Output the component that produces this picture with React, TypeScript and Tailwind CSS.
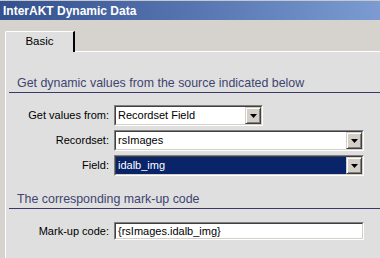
import React from "react";

const font = { fontFamily: '"Liberation Sans", Arial, sans-serif' };

function Arrow() {
  return (
    <div className="w-[16px] h-[17px] bg-[#d4d0c8] border-t border-l border-t-[#d4d0c8] border-l-[#d4d0c8] border-r border-b border-r-[#404040] border-b-[#404040] flex items-center justify-center shadow-[inset_1px_1px_0_#ffffff,inset_-1px_-1px_0_#808080]">
      <svg width="7" height="4" viewBox="0 0 7 4">
        <polygon points="0,0 7,0 3.5,4" fill="#000" />
      </svg>
    </div>
  );
}

function Select({ value, width, selected }: { value: string; width: string; selected?: boolean }) {
  return (
    <div className={`${width} h-[21px] border-t border-l border-t-[#808080] border-l-[#808080] border-r border-b border-r-white border-b-white`}>
      <div className="h-full border-t border-l border-t-[#404040] border-l-[#404040] border-r border-b border-r-[#d4d0c8] border-b-[#d4d0c8] flex items-center">
        <div className={`flex-1 h-full flex items-center pl-[2px] ${selected ? "bg-[#0a246a] text-white" : "bg-white text-black"}`}>
          <span className="leading-none">{value}</span>
        </div>
        <Arrow />
      </div>
    </div>
  );
}

function Header({ text }: { text: string }) {
  return (
    <div className="ml-[3px] border-b border-b-[#3a3a6a] pl-[8px] pb-[2px] text-[#404472] text-[12.4px] leading-[14px]">
      {text}
    </div>
  );
}

export default function App() {
  return (
    <div className="w-[380px] h-[258px] bg-[#d6d3ce] overflow-hidden text-[11px] flex flex-col" style={font}>
      <div className="h-[1px] bg-[#c8c8c8]" />
      <div className="h-[19px] bg-gradient-to-r from-[#33508f] to-[#7b9bd2] flex items-center pl-[3px]">
        <span className="text-white font-bold text-[12px] leading-none">InterAKT Dynamic Data</span>
      </div>
      <div className="flex-1 flex flex-col pl-[5px] pt-[11px]">
        <div className="flex items-end h-[21px]">
          <div className="w-[70px] h-[21px] bg-[#dfdfdf] border-t border-l border-t-white border-l-white border-r-2 border-r-[#000] rounded-tl-[2px] flex items-center justify-center text-black text-[11.5px]">
            Basic
          </div>
          <div className="flex-1 border-b border-b-white" />
        </div>
        <div className="flex-1 bg-[#dfdfdf] border-l border-l-white pt-[24px] flex flex-col">
          <Header text="Get dynamic values from the source indicated below" />
          <div className="flex flex-col gap-[4px] mt-[12px]">
            <div className="flex items-center">
              <div className="w-[108px] text-right pr-[5px]">Get values from:</div>
              <Select value="Recordset Field" width="w-[149px]" />
            </div>
            <div className="flex items-center">
              <div className="w-[108px] text-right pr-[5px]">Recordset:</div>
              <Select value="rsImages" width="w-[250px]" />
            </div>
            <div className="flex items-center">
              <div className="w-[108px] text-right pr-[5px]">Field:</div>
              <Select value="idalb_img" width="w-[250px]" selected />
            </div>
          </div>
          <div className="mt-[16px]">
            <Header text="The corresponding mark-up code" />
          </div>
          <div className="flex items-center mt-[13px]">
            <div className="w-[108px] text-right pr-[5px]">Mark-up code:</div>
            <div className="w-[250px] h-[18px] border-t border-l border-t-[#808080] border-l-[#808080] border-r border-b border-r-white border-b-white">
              <div className="h-full border-t border-l border-t-[#404040] border-l-[#404040] border-r border-b border-r-[#d4d0c8] border-b-[#d4d0c8] bg-white flex items-center pl-[2px]">
                {"{rsImages.idalb_img}"}
              </div>
            </div>
          </div>
        </div>
      </div>
    </div>
  );
}
